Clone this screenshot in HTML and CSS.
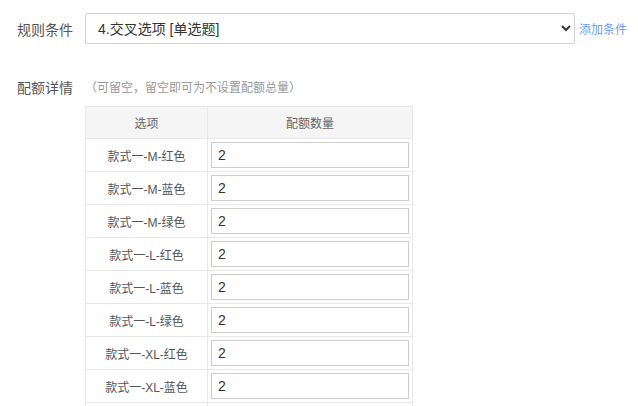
FILE: index.html
```html
<!DOCTYPE html>
<html lang="zh-CN">
<head>
  <meta charset="UTF-8" />
  <title>配额设置</title>
  <link rel="stylesheet" href="styles.css">
</head>
<body>
  <div class="form-row">
    <label class="label">规则条件</label>
    <select class="rule-select">
      <option>4.交叉选项 [单选题]</option>
    </select>
    <a class="add-link" href="#">添加条件</a>
  </div>

  <div class="form-row quota-row">
    <span class="label">配额详情</span>
    <span class="hint">（可留空，留空即可为不设置配额总量）</span>
  </div>

  <table class="quota-table">
    <thead>
      <tr>
        <th class="col-option">选项</th>
        <th class="col-count">配额数量</th>
      </tr>
    </thead>
    <tbody>
      <tr><td>款式一-M-红色</td><td><input type="text" value="2" /></td></tr>
      <tr><td>款式一-M-蓝色</td><td><input type="text" value="2" /></td></tr>
      <tr><td>款式一-M-绿色</td><td><input type="text" value="2" /></td></tr>
      <tr><td>款式一-L-红色</td><td><input type="text" value="2" /></td></tr>
      <tr><td>款式一-L-蓝色</td><td><input type="text" value="2" /></td></tr>
      <tr><td>款式一-L-绿色</td><td><input type="text" value="2" /></td></tr>
      <tr><td>款式一-XL-红色</td><td><input type="text" value="2" /></td></tr>
      <tr><td>款式一-XL-蓝色</td><td><input type="text" value="2" /></td></tr>
      <tr><td>款式一-XL-绿色</td><td><input type="text" value="2" /></td></tr>
    </tbody>
  </table>
</body>
</html>
```

FILE: styles.css
```css
html, body {
  margin: 0;
  padding: 0;
  overflow: hidden;
}
body {
  background: #fff;
  font-family: "Liberation Sans", "Noto Sans CJK SC", sans-serif;
  color: #333;
  padding: 13px 0 0 17px;
}

.form-row {
  display: flex;
  align-items: center;
}

.label {
  width: 68px;
  font-size: 14px;
  color: #555;
  line-height: 20px;
  padding-top: 3px;
}

.rule-select {
  width: 490px;
  height: 31px;
  border: 1px solid #d4d4d4;
  border-radius: 2px;
  background: #fff;
  font-family: "Liberation Sans", "Noto Sans CJK SC", sans-serif;
  font-size: 14px;
  color: #333;
  padding: 0 8px;
}

.add-link {
  margin-left: 4px;
  font-size: 12px;
  color: #6f9cf2;
  text-decoration: none;
}

.quota-row {
  margin-top: 34px;
}
.quota-row .label {
  padding-top: 0;
}

.hint {
  font-size: 12px;
  color: #999;
  line-height: 20px;
}

.quota-table {
  margin: 8px 0 0 68px;
  border-collapse: collapse;
  font-size: 12px;
}

.quota-table th,
.quota-table td {
  border: 1px solid #e8e8e8;
  padding: 3px;
}

.quota-table th {
  height: 25px;
  background: #f5f5f5;
  font-weight: normal;
  color: #666;
}

.col-option {
  width: 115px;
}
.col-count {
  width: 198px;
}

.quota-table td:first-child {
  text-align: center;
  color: #555;
}

.quota-table input {
  display: block;
  box-sizing: border-box;
  width: 198px;
  height: 26px;
  margin: 0;
  border: 1px solid #cdcdcd;
  padding: 0 6px;
  font-family: "Liberation Sans", "Noto Sans CJK SC", sans-serif;
  font-size: 14px;
  color: #333;
}
```
